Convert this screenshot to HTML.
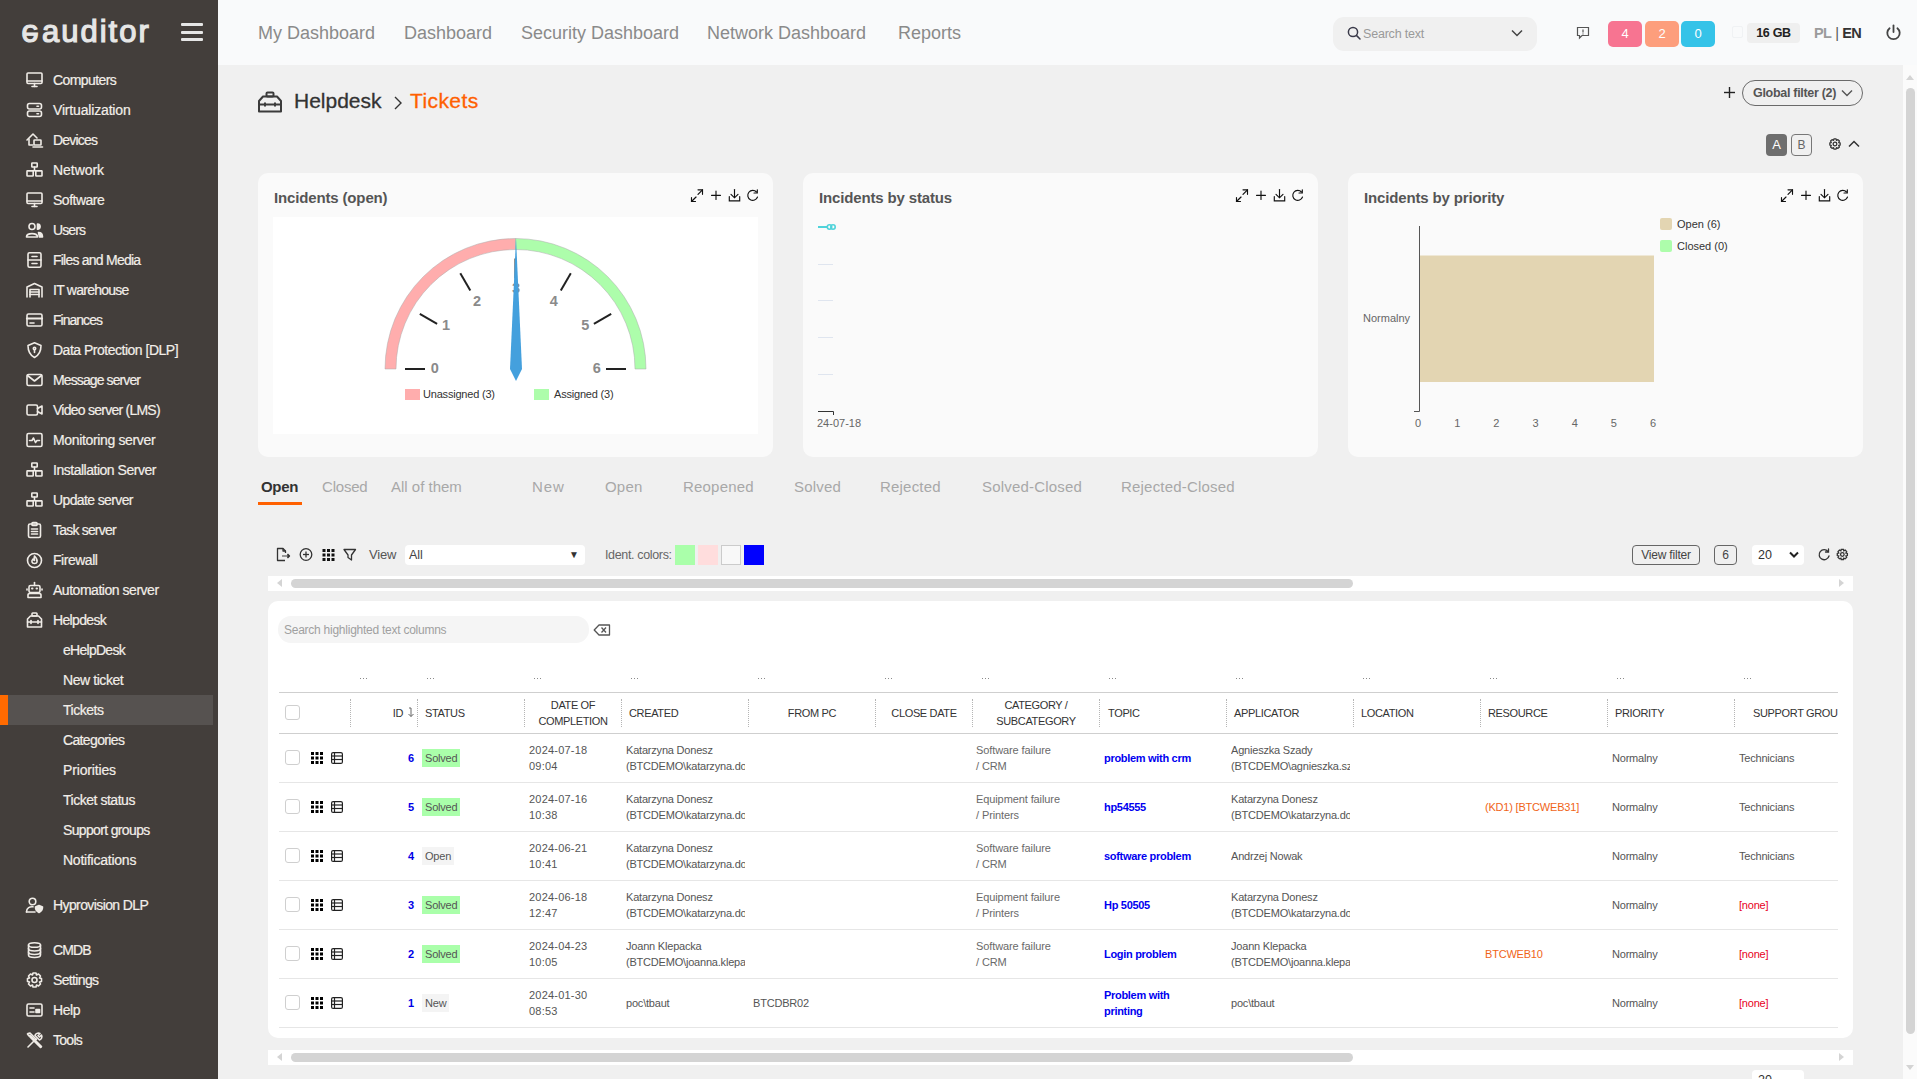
<!DOCTYPE html>
<html><head><meta charset="utf-8">
<style>
*{box-sizing:border-box;margin:0;padding:0}
html,body{width:1917px;height:1079px;overflow:hidden}
body{position:relative;background:#f0f0f0;font-family:"Liberation Sans",sans-serif;color:#555}
.abs{position:absolute}
#sb{position:absolute;left:0;top:0;width:218px;height:1079px;background:#433e3b}
.si{position:absolute;left:0;height:30px;line-height:30px;font-size:14px;letter-spacing:-0.45px;color:#f2eee9;white-space:nowrap;-webkit-text-stroke:0.2px #f2eee9}
.si span{position:absolute;left:53px;top:0}
.si.sub span{left:63px}
.si svg{position:absolute;left:25px;top:6px;width:19px;height:18px;fill:none;stroke:#efebe6;stroke-width:1.6;stroke-linecap:round;stroke-linejoin:round}
.act{background:#565250;width:213px}
.act:before{content:"";position:absolute;left:0;top:0;width:8px;height:30px;background:#ff6a00}
#top{position:absolute;left:218px;top:0;width:1699px;height:65px;background:#f9fafb}
.badge{top:21px;width:34px;height:26px;border-radius:5px;color:#fff;font-size:13px;line-height:26px;text-align:center}
.card{width:515px;height:284px;background:#fafafa;border-radius:10px}
.ctitle{font-size:15px;font-weight:bold;color:#555;line-height:20px;white-space:nowrap;letter-spacing:-0.15px}
.tab{top:477px;font-size:15px;line-height:20px;color:#a8a8a8;white-space:nowrap}
.dots{width:7px;height:1px;background:repeating-linear-gradient(90deg,#8a8a8a 0 1px,transparent 1px 3px)}
.cb{width:15px;height:15px;border:1px solid #cfcfcf;border-radius:3px;background:#fff}
.th{font-size:11px;line-height:16px;color:#333;letter-spacing:-0.35px;white-space:nowrap}
.td{font-size:11px;line-height:16px;color:#555;letter-spacing:-0.2px;white-space:nowrap}
.tid{width:100px;text-align:right;font-size:11px;font-weight:bold;line-height:16px;color:#0000e6}
.badge2{height:18px;padding:0 3px;font-size:11px;line-height:18px;color:#555;letter-spacing:-0.2px}
.ttopic{font-size:11px;font-weight:bold;line-height:16px;color:#0000f0;letter-spacing:-0.3px;white-space:nowrap}
.tres{font-size:11px;line-height:16px;color:#f06418;letter-spacing:-0.2px;white-space:nowrap}
.tnone{font-size:11px;line-height:16px;color:#e8001c;letter-spacing:-0.2px;white-space:nowrap}
.tdate{font-size:11px;line-height:16px;color:#555;letter-spacing:0.2px;white-space:nowrap}
.tcat{font-size:11px;line-height:16px;color:#6a6a6a;letter-spacing:-0.1px;white-space:nowrap}
.nav{position:absolute;top:19px;font-size:18px;color:#8a8a8a;white-space:nowrap;line-height:28px}
</style></head><body>
<div id="sb">
  <svg class="abs" style="left:0;top:0" width="170" height="60" viewBox="0 0 170 60"><text x="42" y="42" font-family="Liberation Sans" font-size="31" fill="#e6e6e6" stroke="#e6e6e6" stroke-width="1.2" letter-spacing="2"><tspan>auditor</tspan></text><text transform="translate(21.5,25) scale(1,-1)" x="0" y="0" font-family="Liberation Sans" font-size="31" fill="#e6e6e6" stroke="#e6e6e6" stroke-width="1.2">e</text></svg>
  <div class="abs" style="left:181px;top:23px;width:22px;height:3px;background:#e6e6e6;border-radius:1px"></div>
  <div class="abs" style="left:181px;top:31px;width:22px;height:3px;background:#e6e6e6;border-radius:1px"></div>
  <div class="abs" style="left:181px;top:38px;width:22px;height:3px;background:#e6e6e6;border-radius:1px"></div>
  <div class="si" style="top:65px;width:218px"><svg viewBox="0 0 19 18"><rect x="2" y="2" width="15" height="10.5" rx="1"/><line x1="2" y1="10" x2="17" y2="10"/><line x1="7" y1="15.5" x2="12" y2="15.5"/><line x1="9.5" y1="12.5" x2="9.5" y2="15.5"/></svg><span style="letter-spacing:-0.58px">Computers</span></div>
<div class="si" style="top:95px;width:218px"><svg viewBox="0 0 19 18"><rect x="2.5" y="2.5" width="14" height="5.5" rx="2"/><rect x="2.5" y="10" width="14" height="5.5" rx="2"/><line x1="12" y1="5.2" x2="13.5" y2="5.2"/><line x1="12" y1="12.8" x2="13.5" y2="12.8"/></svg><span style="letter-spacing:-0.17px">Virtualization</span></div>
<div class="si" style="top:125px;width:218px"><svg viewBox="0 0 19 18"><path d="M2 9 L8 3 L12 7"/><path d="M4 8 V14 H8"/><rect x="9" y="9" width="7" height="5" rx="0.5"/><line x1="8" y1="16" x2="17.5" y2="16"/></svg><span style="letter-spacing:-0.81px">Devices</span></div>
<div class="si" style="top:155px;width:218px"><svg viewBox="0 0 19 18"><rect x="6.8" y="2" width="5.4" height="4" rx="0.5"/><rect x="2" y="9.8" width="6.2" height="5.2" rx="0.5"/><rect x="10.8" y="9.8" width="6.2" height="5.2" rx="0.5"/><path d="M9.5 6 V9.8 M3 9.8 H16"/></svg><span style="letter-spacing:-0.05px">Network</span></div>
<div class="si" style="top:185px;width:218px"><svg viewBox="0 0 19 18"><rect x="2" y="2" width="15" height="10.5" rx="1"/><line x1="2" y1="10" x2="17" y2="10"/><line x1="7" y1="15.5" x2="12" y2="15.5"/><line x1="9.5" y1="12.5" x2="9.5" y2="15.5"/></svg><span style="letter-spacing:-0.49px">Software</span></div>
<div class="si" style="top:215px;width:218px"><svg viewBox="0 0 19 18"><circle cx="7" cy="5.5" r="3"/><path d="M1.5 16 C1.5 11.5 12.5 11.5 12.5 16 Z"/><path d="M12.5 3 A2.6 2.6 0 0 1 12.5 8.2 Z" fill="#efebe6"/><path d="M13.5 11.5 C16 11.5 17.5 13 17.5 16 H14.5 Z" fill="#efebe6"/></svg><span style="letter-spacing:-0.91px">Users</span></div>
<div class="si" style="top:245px;width:218px"><svg viewBox="0 0 19 18"><rect x="3" y="1.8" width="13" height="14.5" rx="1.5"/><line x1="3" y1="9" x2="16" y2="9"/><line x1="7" y1="5.5" x2="12" y2="5.5"/><line x1="7" y1="12.5" x2="12" y2="12.5"/></svg><span style="letter-spacing:-0.77px">Files and Media</span></div>
<div class="si" style="top:275px;width:218px"><svg viewBox="0 0 19 18"><path d="M2 16 V6 L9.5 2.5 L17 6 V16"/><path d="M5 16 V8.5 H14 V16"/><line x1="5" y1="11" x2="14" y2="11"/><line x1="5" y1="13.5" x2="14" y2="13.5"/></svg><span style="letter-spacing:-0.75px">IT warehouse</span></div>
<div class="si" style="top:305px;width:218px"><svg viewBox="0 0 19 18"><rect x="2" y="3" width="15" height="12" rx="1.5"/><line x1="2" y1="7.5" x2="17" y2="7.5" stroke-width="2.2"/><line x1="5" y1="12" x2="9" y2="12"/></svg><span style="letter-spacing:-0.98px">Finances</span></div>
<div class="si" style="top:335px;width:218px"><svg viewBox="0 0 19 18"><path d="M9.5 1.8 L16 4.5 C16 10.5 13.5 14.5 9.5 16.5 C5.5 14.5 3 10.5 3 4.5 Z"/><circle cx="9.5" cy="7.5" r="1.2"/><line x1="9.5" y1="8.5" x2="9.5" y2="11.5"/></svg><span style="letter-spacing:-0.49px">Data Protection [DLP]</span></div>
<div class="si" style="top:365px;width:218px"><svg viewBox="0 0 19 18"><rect x="2" y="3.5" width="15" height="11" rx="1.5"/><path d="M2.5 4.5 L9.5 10 L16.5 4.5"/></svg><span style="letter-spacing:-0.89px">Message server</span></div>
<div class="si" style="top:395px;width:218px"><svg viewBox="0 0 19 18"><rect x="2" y="4" width="10.5" height="10" rx="1.5"/><path d="M12.5 7.5 L17 5 V13 L12.5 10.5"/></svg><span style="letter-spacing:-0.75px">Video server (LMS)</span></div>
<div class="si" style="top:425px;width:218px"><svg viewBox="0 0 19 18"><rect x="2" y="2.5" width="15" height="13" rx="1.5"/><path d="M4.5 9.5 H7 L8.5 7 L10.5 11.5 L12 9.5 H14.5"/></svg><span style="letter-spacing:-0.35px">Monitoring server</span></div>
<div class="si" style="top:455px;width:218px"><svg viewBox="0 0 19 18"><rect x="6.8" y="2" width="5.4" height="4" rx="0.5"/><rect x="2" y="9.8" width="6.2" height="5.2" rx="0.5"/><rect x="10.8" y="9.8" width="6.2" height="5.2" rx="0.5"/><path d="M9.5 6 V9.8 M3 9.8 H16"/></svg><span style="letter-spacing:-0.48px">Installation Server</span></div>
<div class="si" style="top:485px;width:218px"><svg viewBox="0 0 19 18"><rect x="6.8" y="2" width="5.4" height="4" rx="0.5"/><rect x="2" y="9.8" width="6.2" height="5.2" rx="0.5"/><rect x="10.8" y="9.8" width="6.2" height="5.2" rx="0.5"/><path d="M9.5 6 V9.8 M3 9.8 H16"/></svg><span style="letter-spacing:-0.62px">Update server</span></div>
<div class="si" style="top:515px;width:218px"><svg viewBox="0 0 19 18"><rect x="3.5" y="3" width="12" height="13.5" rx="1.5"/><rect x="7" y="1.5" width="5" height="3" rx="0.8"/><line x1="6.5" y1="8" x2="12.5" y2="8"/><line x1="6.5" y1="10.5" x2="12.5" y2="10.5"/><line x1="6.5" y1="13" x2="12.5" y2="13"/></svg><span style="letter-spacing:-0.8px">Task server</span></div>
<div class="si" style="top:545px;width:218px"><svg viewBox="0 0 19 18"><circle cx="9.5" cy="9.5" r="7"/><path d="M9.5 5 C12 7.5 12.5 9 12 11 C11.5 13 7.5 13 7 11 C6.5 9.5 7.5 8.5 8 8 C8.5 9 9 9.5 9.5 9.5 C9 8 9 6.5 9.5 5 Z"/></svg><span style="letter-spacing:-0.47px">Firewall</span></div>
<div class="si" style="top:575px;width:218px"><svg viewBox="0 0 19 18"><rect x="4" y="4.5" width="11" height="7" rx="1.5"/><line x1="9.5" y1="1.5" x2="9.5" y2="4.5"/><line x1="7" y1="7.5" x2="7.5" y2="7.5" stroke-width="2"/><line x1="11.5" y1="7.5" x2="12" y2="7.5" stroke-width="2"/><path d="M3 16.5 V14 C3 13 4 12.5 5 12.5 H14 C15 12.5 16 13 16 14 V16.5 Z"/><line x1="2" y1="8" x2="2" y2="9"/><line x1="17" y1="8" x2="17" y2="9"/></svg><span style="letter-spacing:-0.47px">Automation server</span></div>
<div class="si" style="top:605px;width:218px"><svg viewBox="0 0 19 18"><rect x="7" y="2" width="5" height="3" rx="0.8"/><path d="M2.5 16 V8 L5.5 5 H13.5 L16.5 8 V16 Z"/><line x1="2.5" y1="11" x2="16.5" y2="11"/><line x1="6" y1="9.5" x2="6" y2="12.5"/><line x1="13" y1="9.5" x2="13" y2="12.5"/></svg><span style="letter-spacing:-0.65px">Helpdesk</span></div>
<div class="si sub" style="top:635px;width:218px"><span style="letter-spacing:-0.72px">eHelpDesk</span></div>
<div class="si sub" style="top:665px;width:218px"><span style="letter-spacing:-0.43px">New ticket</span></div>
<div class="si sub act" style="top:695px;width:213px"><span style="letter-spacing:-0.47px">Tickets</span></div>
<div class="si sub" style="top:725px;width:218px"><span style="letter-spacing:-0.64px">Categories</span></div>
<div class="si sub" style="top:755px;width:218px"><span style="letter-spacing:-0.16px">Priorities</span></div>
<div class="si sub" style="top:785px;width:218px"><span style="letter-spacing:-0.47px">Ticket status</span></div>
<div class="si sub" style="top:815px;width:218px"><span style="letter-spacing:-0.65px">Support groups</span></div>
<div class="si sub" style="top:845px;width:218px"><span style="letter-spacing:-0.24px">Notifications</span></div>
<div class="si" style="top:890px;width:218px"><svg viewBox="0 0 19 18"><circle cx="7.5" cy="5.5" r="3.3"/><path d="M1.5 16 C1.5 11.5 5 10.5 8 10.8"/><line x1="1.5" y1="16" x2="10" y2="16"/><path d="M14 9.5 L17.5 11 C17.5 14 16 15.5 14 16.5 C12 15.5 10.5 14 10.5 11 Z" fill="#efebe6"/></svg><span style="letter-spacing:-0.6px">Hyprovision DLP</span></div>
<div class="si" style="top:935px;width:218px"><svg viewBox="0 0 19 18"><ellipse cx="9.5" cy="4" rx="6" ry="2.3"/><path d="M3.5 4 V14 C3.5 15.5 6 16.5 9.5 16.5 C13 16.5 15.5 15.5 15.5 14 V4"/><path d="M3.5 7.5 C3.5 9 6 10 9.5 10 C13 10 15.5 9 15.5 7.5"/><path d="M3.5 11 C3.5 12.5 6 13.5 9.5 13.5 C13 13.5 15.5 12.5 15.5 11"/></svg><span style="letter-spacing:-0.84px">CMDB</span></div>
<div class="si" style="top:965px;width:218px"><svg viewBox="0 0 19 18"><circle cx="9.5" cy="9" r="2.5"/><path d="M8 2 H11 L11.5 4 L13.5 3 L15.5 5 L14.5 7 L16.5 7.5 V10.5 L14.5 11 L15.5 13 L13.5 15 L11.5 14 L11 16 H8 L7.5 14 L5.5 15 L3.5 13 L4.5 11 L2.5 10.5 V7.5 L4.5 7 L3.5 5 L5.5 3 L7.5 4 Z"/></svg><span style="letter-spacing:-0.65px">Settings</span></div>
<div class="si" style="top:995px;width:218px"><svg viewBox="0 0 19 18"><rect x="2" y="3" width="15" height="12" rx="1.5"/><line x1="5" y1="7" x2="9" y2="7"/><line x1="5" y1="11" x2="9" y2="11"/><rect x="11" y="8.5" width="3.5" height="3" fill="#efebe6"/></svg><span style="letter-spacing:-0.46px">Help</span></div>
<div class="si" style="top:1025px;width:218px"><svg viewBox="0 0 19 18"><path d="M3 16 L11 8"/><path d="M10 4.5 C10.5 2.5 13 1.5 15 2.5 L13 4.5 L14.5 6 L16.5 4 C17.5 6 16.5 8.5 14.5 9 Z"/><path d="M3 2.5 L5 2 L11.5 8.5 M16 16 L11.5 11.5"/><path d="M2.5 3 L4 5 L6 5 L16.5 15.5 L15.5 16.5 L5 6 L5 4"/></svg><span style="letter-spacing:-0.72px">Tools</span></div>

</div>
<div id="top">
  <div class="nav" style="left:40px">My Dashboard</div>
  <div class="nav" style="left:186px">Dashboard</div>
  <div class="nav" style="left:303px">Security Dashboard</div>
  <div class="nav" style="left:489px">Network Dashboard</div>
  <div class="nav" style="left:680px">Reports</div>
    <div class="abs" style="left:1115px;top:17px;width:204px;height:34px;background:#f0f0f0;border-radius:11px"></div>
  <svg class="abs" style="left:1129px;top:26px" width="15" height="15" viewBox="0 0 15 15" fill="none" stroke="#3a3a4a" stroke-width="1.5"><circle cx="6" cy="6" r="4.6"/><line x1="9.4" y1="9.4" x2="13" y2="13" stroke-linecap="round"/></svg>
  <div class="abs" style="left:1145px;top:26px;font-size:12.5px;line-height:16px;color:#9a9a9a;letter-spacing:-0.2px">Search text</div>
  <svg class="abs" style="left:1293px;top:29px" width="12" height="8" viewBox="0 0 12 8" fill="none" stroke="#444" stroke-width="1.5"><path d="M1 1.5 L6 6.5 L11 1.5"/></svg>
  <svg class="abs" style="left:1358px;top:26px" width="14" height="14" viewBox="0 0 14 14" fill="none" stroke="#555" stroke-width="1.2"><path d="M1.5 1.5 H12.5 V9.5 H6 L3.5 12 V9.5 H1.5 Z"/><line x1="7" y1="3.5" x2="7" y2="6.5"/><line x1="7" y1="7.6" x2="7" y2="8.4"/></svg>
  <div class="abs badge" style="left:1390px;background:#f77491">4</div>
  <div class="abs badge" style="left:1427px;background:#fd9e7c">2</div>
  <div class="abs badge" style="left:1463px;background:#35c3e8">0</div>
  <div class="abs" style="left:1514px;top:26px;width:11px;height:12px;border:1px solid #f0f2f4;border-radius:2px"></div>
  <div class="abs" style="left:1529px;top:23px;width:53px;height:20px;background:#efefef;border-radius:4px;font-size:12.5px;font-weight:bold;color:#222;line-height:20px;text-align:center;letter-spacing:-0.3px">16 GB</div>
  <div class="abs" style="left:1596px;top:23px;font-size:14.5px;font-weight:bold;line-height:20px;letter-spacing:-0.7px;white-space:nowrap"><span style="color:#9b9b9b">PL</span><span style="color:#555;font-weight:normal;margin-left:4px">|</span><span style="color:#333;margin-left:4px">EN</span></div>
  <svg class="abs" style="left:1667px;top:24px" width="17" height="17" viewBox="0 0 17 17" fill="none" stroke="#444" stroke-width="1.8" stroke-linecap="round"><path d="M4.6 4.2 A6.2 6.2 0 1 0 12.4 4.2"/><line x1="8.5" y1="1.5" x2="8.5" y2="8"/></svg>

</div>
<!-- breadcrumb -->
<svg class="abs" style="left:257px;top:90px" width="26" height="24" viewBox="0 0 26 24" fill="none" stroke="#3b3b3b" stroke-width="2" stroke-linejoin="round"><rect x="9.5" y="2.5" width="7" height="4" rx="1"/><path d="M2 21.5 V11 L6 6.5 H20 L24 11 V21.5 Z"/><line x1="2" y1="14.5" x2="24" y2="14.5"/><line x1="8" y1="12.5" x2="8" y2="16.5"/><line x1="18" y1="12.5" x2="18" y2="16.5"/></svg>
<div class="abs" style="left:294px;top:88px;font-size:21px;line-height:26px;color:#333;white-space:nowrap;-webkit-text-stroke:0.3px #333">Helpdesk</div>
<svg class="abs" style="left:392px;top:95px" width="12" height="16" viewBox="0 0 12 16" fill="none" stroke="#333" stroke-width="1.4"><path d="M3 2 L9 8 L3 14"/></svg>
<div class="abs" style="left:410px;top:88px;font-size:21px;line-height:26px;color:#ff6000;white-space:nowrap;-webkit-text-stroke:0.3px #ff6000;letter-spacing:0.4px">Tickets</div>
<!-- global filter -->
<svg class="abs" style="left:1723px;top:86px" width="13" height="13" viewBox="0 0 13 13" stroke="#222" stroke-width="1.4"><line x1="6.5" y1="1" x2="6.5" y2="12"/><line x1="1" y1="6.5" x2="12" y2="6.5"/></svg>
<div class="abs" style="left:1742px;top:80px;width:121px;height:26px;border:1px solid #6a6a6a;border-radius:13px"></div>
<div class="abs" style="left:1753px;top:85px;font-size:12.5px;font-weight:bold;line-height:16px;color:#555;letter-spacing:-0.3px;white-space:nowrap">Global filter (2)</div>
<svg class="abs" style="left:1841px;top:89px" width="12" height="8" viewBox="0 0 12 8" fill="none" stroke="#555" stroke-width="1.4"><path d="M1 1.5 L6 6.5 L11 1.5"/></svg>
<div class="abs" style="left:1766px;top:134px;width:21px;height:22px;background:#6e6e6e;border-radius:4px;color:#fff;font-size:13px;line-height:22px;text-align:center">A</div>
<div class="abs" style="left:1791px;top:134px;width:21px;height:22px;border:1px solid #777;border-radius:4px;color:#666;font-size:12px;line-height:20px;text-align:center">B</div>
<svg class="abs" style="left:1828px;top:137px" width="14" height="14" viewBox="0 0 19 18" fill="none" stroke="#333" stroke-width="1.7" stroke-linejoin="round"><circle cx="9.5" cy="9" r="2.5"/><path d="M8 2 H11 L11.5 4 L13.5 3 L15.5 5 L14.5 7 L16.5 7.5 V10.5 L14.5 11 L15.5 13 L13.5 15 L11.5 14 L11 16 H8 L7.5 14 L5.5 15 L3.5 13 L4.5 11 L2.5 10.5 V7.5 L4.5 7 L3.5 5 L5.5 3 L7.5 4 Z"/></svg>
<svg class="abs" style="left:1848px;top:139px" width="12" height="9" viewBox="0 0 12 9" fill="none" stroke="#333" stroke-width="1.5"><path d="M1 7.5 L6 2.5 L11 7.5"/></svg>
<!-- right scrollbar -->
<div class="abs" style="left:1903px;top:65px;width:14px;height:1014px;background:#fbfbfb"></div>
<div class="abs" style="left:1906px;top:88px;width:9px;height:946px;background:#d4d4d4;border-radius:5px"></div>
<div class="abs" style="left:1906px;top:75px;width:0;height:0;border-left:4.5px solid transparent;border-right:4.5px solid transparent;border-bottom:5px solid #d4d4d4"></div>
<div class="abs" style="left:1906px;top:1065px;width:0;height:0;border-left:4.5px solid transparent;border-right:4.5px solid transparent;border-top:5px solid #d4d4d4"></div>
<div class="abs card" style="left:258px;top:173px"></div>
<div class="abs ctitle" style="left:274px;top:188px">Incidents (open)</div>
<svg class="abs" style="left:690px;top:188px" width="72" height="15" viewBox="0 0 72 15" fill="none" stroke="#111" stroke-width="1.15" stroke-linecap="round">
<path d="M1.5 13.5 L6 9"/><path d="M1.5 9.5 V13.5 H5.5"/><path d="M8 1.8 H12.5 V6.3" /><path d="M12.5 1.8 L8 6.3"/>
<line x1="26" y1="3" x2="26" y2="11.5"/><line x1="21.5" y1="7.3" x2="30.5" y2="7.3"/>
<line x1="44.5" y1="1.5" x2="44.5" y2="9.5"/><path d="M41 6.3 L44.5 9.8 L48 6.3"/><path d="M39.3 8.5 V12.8 H49.7 V8.5"/>
<path d="M66.5 4 A5 5 0 1 0 67.5 9"/><path d="M67.3 1.8 V5 H64"/>
</svg>
<div class="abs card" style="left:803px;top:173px"></div>
<div class="abs ctitle" style="left:819px;top:188px">Incidents by status</div>
<svg class="abs" style="left:1235px;top:188px" width="72" height="15" viewBox="0 0 72 15" fill="none" stroke="#111" stroke-width="1.15" stroke-linecap="round">
<path d="M1.5 13.5 L6 9"/><path d="M1.5 9.5 V13.5 H5.5"/><path d="M8 1.8 H12.5 V6.3" /><path d="M12.5 1.8 L8 6.3"/>
<line x1="26" y1="3" x2="26" y2="11.5"/><line x1="21.5" y1="7.3" x2="30.5" y2="7.3"/>
<line x1="44.5" y1="1.5" x2="44.5" y2="9.5"/><path d="M41 6.3 L44.5 9.8 L48 6.3"/><path d="M39.3 8.5 V12.8 H49.7 V8.5"/>
<path d="M66.5 4 A5 5 0 1 0 67.5 9"/><path d="M67.3 1.8 V5 H64"/>
</svg>
<div class="abs card" style="left:1348px;top:173px"></div>
<div class="abs ctitle" style="left:1364px;top:188px">Incidents by priority</div>
<svg class="abs" style="left:1780px;top:188px" width="72" height="15" viewBox="0 0 72 15" fill="none" stroke="#111" stroke-width="1.15" stroke-linecap="round">
<path d="M1.5 13.5 L6 9"/><path d="M1.5 9.5 V13.5 H5.5"/><path d="M8 1.8 H12.5 V6.3" /><path d="M12.5 1.8 L8 6.3"/>
<line x1="26" y1="3" x2="26" y2="11.5"/><line x1="21.5" y1="7.3" x2="30.5" y2="7.3"/>
<line x1="44.5" y1="1.5" x2="44.5" y2="9.5"/><path d="M41 6.3 L44.5 9.8 L48 6.3"/><path d="M39.3 8.5 V12.8 H49.7 V8.5"/>
<path d="M66.5 4 A5 5 0 1 0 67.5 9"/><path d="M67.3 1.8 V5 H64"/>
</svg>
<div class="abs" style="left:273px;top:217px;width:485px;height:217px;background:#fff"></div>
<svg class="abs" style="left:273px;top:217px" width="485" height="217" viewBox="0 0 485 217"><path d="M112 152 A130.5 130.5 0 0 1 242.5 21.5 L242.5 32.5 A119.5 119.5 0 0 0 123 152 Z" fill="#ffadad" stroke="#aaa" stroke-width="0.5"/><path d="M242.5 21.5 A130.5 130.5 0 0 1 373 152 L362 152 A119.5 119.5 0 0 0 242.5 32.5 Z" fill="#adfdab" stroke="#aaa" stroke-width="0.5"/><line x1="152.0" y1="152.0" x2="132.0" y2="152.0" stroke="#222" stroke-width="2"/><text x="161.8" y="155.7" text-anchor="middle" font-family="Liberation Sans" font-weight="bold" font-size="14.5" fill="#8a8a8a">0</text><line x1="164.1" y1="106.8" x2="146.8" y2="96.8" stroke="#222" stroke-width="2"/><text x="173.0" y="112.6" text-anchor="middle" font-family="Liberation Sans" font-weight="bold" font-size="14.5" fill="#8a8a8a">1</text><line x1="197.3" y1="73.6" x2="187.3" y2="56.3" stroke="#222" stroke-width="2"/><text x="204.0" y="89.0" text-anchor="middle" font-family="Liberation Sans" font-weight="bold" font-size="14.5" fill="#8a8a8a">2</text><line x1="242.5" y1="61.5" x2="242.5" y2="41.5" stroke="#222" stroke-width="2"/><text x="243.0" y="76.2" text-anchor="middle" font-family="Liberation Sans" font-weight="bold" font-size="14.5" fill="#8a8a8a">3</text><line x1="287.8" y1="73.6" x2="297.8" y2="56.3" stroke="#222" stroke-width="2"/><text x="280.7" y="89.0" text-anchor="middle" font-family="Liberation Sans" font-weight="bold" font-size="14.5" fill="#8a8a8a">4</text><line x1="320.9" y1="106.8" x2="338.2" y2="96.8" stroke="#222" stroke-width="2"/><text x="312.3" y="112.6" text-anchor="middle" font-family="Liberation Sans" font-weight="bold" font-size="14.5" fill="#8a8a8a">5</text><line x1="333.0" y1="152.0" x2="353.0" y2="152.0" stroke="#222" stroke-width="2"/><text x="323.8" y="155.7" text-anchor="middle" font-family="Liberation Sans" font-weight="bold" font-size="14.5" fill="#8a8a8a">6</text><path d="M243 21 L249 152 L243 164 L237 152 Z" fill="#44a0dd"/><rect x="132" y="172" width="15" height="11" fill="#ffadad"/><text x="150" y="181" font-family="Liberation Sans" font-size="11" fill="#333" letter-spacing="-0.2">Unassigned (3)</text><rect x="261" y="172" width="15" height="11" fill="#adfdab"/><text x="281" y="181" font-family="Liberation Sans" font-size="11" fill="#333" letter-spacing="-0.2">Assigned (3)</text></svg>
<svg class="abs" style="left:803px;top:173px" width="515" height="284" viewBox="0 0 515 284">
<line x1="15" y1="54" x2="25" y2="54" stroke="#4fd3da" stroke-width="2"/><circle cx="26.5" cy="54" r="2.2" fill="none" stroke="#4fd3da" stroke-width="1.6"/><circle cx="30" cy="54" r="2.2" fill="none" stroke="#4fd3da" stroke-width="1.6"/>
<g stroke="#dfe5ef" stroke-width="1"><line x1="15" y1="91.5" x2="30" y2="91.5"/><line x1="15" y1="127.5" x2="30" y2="127.5"/><line x1="15" y1="164.5" x2="30" y2="164.5"/><line x1="15" y1="201.5" x2="30" y2="201.5"/></g>
<path d="M15 238.5 H30.5 V242" fill="none" stroke="#333" stroke-width="1"/>
<text x="14" y="254" font-family="Liberation Sans" font-size="11" fill="#666">24-07-18</text>
</svg>
<svg class="abs" style="left:1348px;top:173px" width="515" height="284" viewBox="0 0 515 284">
<rect x="71" y="82.5" width="235" height="126.5" fill="#e3d5b2"/>
<path d="M71.5 53 V238.5 H66" fill="none" stroke="#555" stroke-width="1"/>
<text x="15" y="149" font-family="Liberation Sans" font-size="11" fill="#666">Normalny</text>
<text x="70.0" y="254" text-anchor="middle" font-family="Liberation Sans" font-size="11" fill="#666">0</text><text x="109.2" y="254" text-anchor="middle" font-family="Liberation Sans" font-size="11" fill="#666">1</text><text x="148.3" y="254" text-anchor="middle" font-family="Liberation Sans" font-size="11" fill="#666">2</text><text x="187.5" y="254" text-anchor="middle" font-family="Liberation Sans" font-size="11" fill="#666">3</text><text x="226.7" y="254" text-anchor="middle" font-family="Liberation Sans" font-size="11" fill="#666">4</text><text x="265.9" y="254" text-anchor="middle" font-family="Liberation Sans" font-size="11" fill="#666">5</text><text x="305.0" y="254" text-anchor="middle" font-family="Liberation Sans" font-size="11" fill="#666">6</text>
<rect x="312" y="45" width="12" height="12" rx="2" fill="#e3d5b2"/><text x="329" y="55" font-family="Liberation Sans" font-size="11" fill="#333">Open (6)</text>
<rect x="312" y="67" width="12" height="12" rx="2" fill="#adfdab"/><text x="329" y="77" font-family="Liberation Sans" font-size="11" fill="#333">Closed (0)</text>
</svg>

<!-- tabs -->
<div class="abs tab" style="left:261px;font-weight:bold;color:#333;letter-spacing:-0.3px">Open</div>
<div class="abs" style="left:258px;top:502px;width:44px;height:3px;background:#ff6000"></div>
<div class="abs tab" style="left:322px;letter-spacing:-0.2px">Closed</div>
<div class="abs tab" style="left:391px">All of them</div>
<div class="abs tab" style="left:532px;letter-spacing:0.9px">New</div>
<div class="abs tab" style="left:605px;letter-spacing:0.2px">Open</div>
<div class="abs tab" style="left:683px;letter-spacing:0.2px">Reopened</div>
<div class="abs tab" style="left:794px;letter-spacing:0.2px">Solved</div>
<div class="abs tab" style="left:880px;letter-spacing:0.2px">Rejected</div>
<div class="abs tab" style="left:982px;letter-spacing:0.2px">Solved-Closed</div>
<div class="abs tab" style="left:1121px;letter-spacing:0.2px">Rejected-Closed</div>
<!-- toolbar -->
<svg class="abs" style="left:276px;top:547px" width="82" height="15" viewBox="0 0 82 15" fill="none" stroke="#333" stroke-width="1.3" stroke-linejoin="round">
<path d="M9 13.5 H1.5 V1.5 H7 L9.5 4 V6"/><path d="M7 1.5 V4 H9.5" /><line x1="6" y1="9" x2="13" y2="9" stroke="#666"/><path d="M11.5 7 L13.5 9 L11.5 11" fill="#333"/>
<circle cx="30" cy="7.5" r="5.8"/><line x1="30" y1="4.5" x2="30" y2="10.5"/><line x1="27" y1="7.5" x2="33" y2="7.5"/>
<g fill="#111" stroke="none"><rect x="46.5" y="2" width="3" height="3"/><rect x="51" y="2" width="3" height="3"/><rect x="55.5" y="2" width="3" height="3"/><rect x="46.5" y="6.5" width="3" height="3"/><rect x="51" y="6.5" width="3" height="3"/><rect x="55.5" y="6.5" width="3" height="3"/><rect x="46.5" y="11" width="3" height="3"/><rect x="51" y="11" width="3" height="3"/><rect x="55.5" y="11" width="3" height="3"/></g>
<path d="M68 2.5 H79.5 L75.5 8 V13 L72 10.5 V8 Z"/>
</svg>
<div class="abs" style="left:369px;top:547px;font-size:13px;line-height:16px;color:#555;letter-spacing:-0.2px">View</div>
<div class="abs" style="left:405px;top:545px;width:180px;height:20px;background:#fff;border-radius:4px"></div>
<div class="abs" style="left:409px;top:547px;font-size:12.5px;line-height:16px;color:#444">All</div>
<div class="abs" style="left:569px;top:549px;font-size:10px;line-height:12px;color:#333">&#9660;</div>
<div class="abs" style="left:605px;top:547px;font-size:12.5px;line-height:16px;color:#666;letter-spacing:-0.35px">Ident. colors:</div>
<div class="abs" style="left:675px;top:545px;width:20px;height:20px;background:#aaffaa"></div>
<div class="abs" style="left:698px;top:545px;width:20px;height:20px;background:#ffdddd"></div>
<div class="abs" style="left:721px;top:545px;width:20px;height:20px;background:#f8f8f8;border:1px solid #cbcbcb"></div>
<div class="abs" style="left:744px;top:545px;width:20px;height:20px;background:#0000ff"></div>
<div class="abs" style="left:1632px;top:545px;width:68px;height:20px;border:1px solid #666;border-radius:4px;font-size:12px;line-height:18px;text-align:center;color:#444;letter-spacing:-0.2px">View filter</div>
<div class="abs" style="left:1714px;top:545px;width:23px;height:20px;border:1px solid #666;border-radius:4px;font-size:12px;line-height:18px;text-align:center;color:#444">6</div>
<div class="abs" style="left:1752px;top:545px;width:52px;height:20px;background:#fff;border-radius:4px;font-size:12.5px;line-height:20px;color:#333;padding-left:6px">20</div>
<svg class="abs" style="left:1789px;top:551px" width="10" height="8" viewBox="0 0 10 8" fill="none" stroke="#222" stroke-width="2"><path d="M1 1.5 L5 5.5 L9 1.5"/></svg>
<svg class="abs" style="left:1818px;top:548px" width="32" height="13" viewBox="0 0 32 13" fill="none" stroke="#333" stroke-width="1.3" stroke-linecap="round">
<path d="M10 3.5 A5 5 0 1 0 11 8"/><path d="M10.5 1 V4 H7.5"/>
<g transform="translate(17.5,0) scale(0.72)" stroke-width="1.8"><circle cx="9.5" cy="9" r="2.5"/><path d="M8 2 H11 L11.5 4 L13.5 3 L15.5 5 L14.5 7 L16.5 7.5 V10.5 L14.5 11 L15.5 13 L13.5 15 L11.5 14 L11 16 H8 L7.5 14 L5.5 15 L3.5 13 L4.5 11 L2.5 10.5 V7.5 L4.5 7 L3.5 5 L5.5 3 L7.5 4 Z"/></g>
</svg>
<!-- top h scrollbar -->
<div class="abs" style="left:268px;top:576px;width:1585px;height:15px;background:#fff"></div>
<div class="abs" style="left:291px;top:579px;width:1062px;height:9px;background:#d4d4d4;border-radius:5px"></div>
<div class="abs" style="left:277px;top:579px;width:0;height:0;border-top:4.5px solid transparent;border-bottom:4.5px solid transparent;border-right:5px solid #d4d4d4"></div>
<div class="abs" style="left:1839px;top:579px;width:0;height:0;border-top:4.5px solid transparent;border-bottom:4.5px solid transparent;border-left:5px solid #d4d4d4"></div>
<!-- bottom h scrollbar -->
<div class="abs" style="left:268px;top:1050px;width:1585px;height:15px;background:#fff"></div>
<div class="abs" style="left:291px;top:1053px;width:1062px;height:9px;background:#d4d4d4;border-radius:5px"></div>
<div class="abs" style="left:277px;top:1053px;width:0;height:0;border-top:4.5px solid transparent;border-bottom:4.5px solid transparent;border-right:5px solid #d4d4d4"></div>
<div class="abs" style="left:1839px;top:1053px;width:0;height:0;border-top:4.5px solid transparent;border-bottom:4.5px solid transparent;border-left:5px solid #d4d4d4"></div>
<div class="abs" style="left:1752px;top:1070px;width:52px;height:20px;background:#fff;border-radius:4px;font-size:12.5px;line-height:20px;color:#333;padding-left:6px;overflow:hidden">20</div>
<!-- table card -->
<div class="abs" style="left:268px;top:601px;width:1585px;height:437px;background:#fff;border-radius:10px"></div>
<div class="abs" style="left:278px;top:616px;width:311px;height:27px;background:#f5f5f5;border-radius:13px"></div>
<div class="abs" style="left:284px;top:622px;font-size:12px;line-height:16px;color:#a0a0a0;letter-spacing:-0.25px;white-space:nowrap">Search highlighted text columns</div>
<svg class="abs" style="left:593px;top:624px" width="18" height="12" viewBox="0 0 18 12" fill="none" stroke="#555" stroke-width="1.3" stroke-linejoin="round"><path d="M6 1 H16.5 V11 H6 L1.2 6 Z"/><path d="M8.5 3.5 L13 8.5 M13 3.5 L8.5 8.5"/></svg>

<div class="abs" style="left:279px;top:660px;width:1559px;height:380px;overflow:hidden">
<div class="abs dots" style="left:81px;top:18px"></div>
<div class="abs dots" style="left:148px;top:18px"></div>
<div class="abs dots" style="left:255px;top:18px"></div>
<div class="abs dots" style="left:352px;top:18px"></div>
<div class="abs dots" style="left:479px;top:18px"></div>
<div class="abs dots" style="left:606px;top:18px"></div>
<div class="abs dots" style="left:703px;top:18px"></div>
<div class="abs dots" style="left:830px;top:18px"></div>
<div class="abs dots" style="left:957px;top:18px"></div>
<div class="abs dots" style="left:1084px;top:18px"></div>
<div class="abs dots" style="left:1211px;top:18px"></div>
<div class="abs dots" style="left:1338px;top:18px"></div>
<div class="abs dots" style="left:1465px;top:18px"></div>
<div class="abs" style="left:0;top:32px;width:1559px;height:1px;background:#cfcfcf"></div>
<div class="abs" style="left:0;top:73px;width:1559px;height:1px;background:#cfcfcf"></div>
<div class="abs" style="left:71px;top:39px;height:28px;border-left:1px dotted #b5b5b5"></div>
<div class="abs" style="left:138px;top:39px;height:28px;border-left:1px dotted #b5b5b5"></div>
<div class="abs" style="left:245px;top:39px;height:28px;border-left:1px dotted #b5b5b5"></div>
<div class="abs" style="left:342px;top:39px;height:28px;border-left:1px dotted #b5b5b5"></div>
<div class="abs" style="left:469px;top:39px;height:28px;border-left:1px dotted #b5b5b5"></div>
<div class="abs" style="left:596px;top:39px;height:28px;border-left:1px dotted #b5b5b5"></div>
<div class="abs" style="left:693px;top:39px;height:28px;border-left:1px dotted #b5b5b5"></div>
<div class="abs" style="left:820px;top:39px;height:28px;border-left:1px dotted #b5b5b5"></div>
<div class="abs" style="left:947px;top:39px;height:28px;border-left:1px dotted #b5b5b5"></div>
<div class="abs" style="left:1074px;top:39px;height:28px;border-left:1px dotted #b5b5b5"></div>
<div class="abs" style="left:1201px;top:39px;height:28px;border-left:1px dotted #b5b5b5"></div>
<div class="abs" style="left:1328px;top:39px;height:28px;border-left:1px dotted #b5b5b5"></div>
<div class="abs" style="left:1455px;top:39px;height:28px;border-left:1px dotted #b5b5b5"></div>
<div class="abs cb" style="left:6px;top:45px"></div>
<div class="abs th" style="left:24px;top:45px;width:100px;text-align:right">ID</div>
<svg class="abs" style="left:128px;top:47px" width="8" height="11" viewBox="0 0 8 11" fill="none" stroke="#666" stroke-width="1"><path d="M2 1 H4 V9.5 M1.5 7 L4 9.5 L6.5 7"/></svg>
<div class="abs th" style="left:146px;top:45px">STATUS</div>
<div class="abs th" style="left:234px;top:37px;width:120px;text-align:center">DATE OF<br>COMPLETION</div>
<div class="abs th" style="left:350px;top:45px">CREATED</div>
<div class="abs th" style="left:473px;top:45px;width:120px;text-align:center">FROM PC</div>
<div class="abs th" style="left:585px;top:45px;width:120px;text-align:center">CLOSE DATE</div>
<div class="abs th" style="left:697px;top:37px;width:120px;text-align:center">CATEGORY /<br>SUBCATEGORY</div>
<div class="abs th" style="left:829px;top:45px">TOPIC</div>
<div class="abs th" style="left:955px;top:45px">APPLICATOR</div>
<div class="abs th" style="left:1082px;top:45px">LOCATION</div>
<div class="abs th" style="left:1209px;top:45px">RESOURCE</div>
<div class="abs th" style="left:1336px;top:45px">PRIORITY</div>
<div class="abs th" style="left:1474px;top:45px">SUPPORT GROUP</div>
<div class="abs" style="left:0;top:122px;width:1559px;height:1px;background:#e6e6e6"></div>
<div class="abs cb" style="left:6px;top:90.0px"></div>
<svg class="abs" style="left:32px;top:91.5px" width="32" height="12" viewBox="0 0 32 12"><g fill="#000"><rect x="0.0" y="0.0" width="3" height="3"/><rect x="0.0" y="4.5" width="3" height="3"/><rect x="0.0" y="9.0" width="3" height="3"/><rect x="4.5" y="0.0" width="3" height="3"/><rect x="4.5" y="4.5" width="3" height="3"/><rect x="4.5" y="9.0" width="3" height="3"/><rect x="9.0" y="0.0" width="3" height="3"/><rect x="9.0" y="4.5" width="3" height="3"/><rect x="9.0" y="9.0" width="3" height="3"/></g><g fill="none" stroke="#222" stroke-width="1.2"><rect x="20.6" y="0.6" width="10.8" height="10.8" rx="1.5"/><line x1="20.6" y1="4" x2="31.4" y2="4"/><line x1="20.6" y1="7.5" x2="31.4" y2="7.5"/><line x1="23.5" y1="0.6" x2="23.5" y2="11.4"/></g></svg>
<div class="abs tid" style="left:35px;top:89.5px">6</div>
<div class="abs badge2" style="left:143px;top:89.0px;background:#aaffaa">Solved</div>
<div class="abs tdate" style="left:250px;top:81.5px">2024-07-18<br>09:04</div>
<div class="abs td" style="left:347px;top:81.5px;width:119px;overflow:hidden">Katarzyna Donesz<br>(BTCDEMO\katarzyna.donesz)</div>
<div class="abs tcat" style="left:697px;top:81.5px">Software failure<br>/ CRM</div>
<div class="abs ttopic" style="left:825px;top:89.5px">problem with crm</div>
<div class="abs td" style="left:952px;top:81.5px;width:119px;overflow:hidden">Agnieszka Szady<br>(BTCDEMO\agnieszka.szady)</div>
<div class="abs td" style="left:1333px;top:89.5px">Normalny</div>
<div class="abs td" style="left:1460px;top:89.5px">Technicians</div>
<div class="abs" style="left:0;top:171px;width:1559px;height:1px;background:#e6e6e6"></div>
<div class="abs cb" style="left:6px;top:139.0px"></div>
<svg class="abs" style="left:32px;top:140.5px" width="32" height="12" viewBox="0 0 32 12"><g fill="#000"><rect x="0.0" y="0.0" width="3" height="3"/><rect x="0.0" y="4.5" width="3" height="3"/><rect x="0.0" y="9.0" width="3" height="3"/><rect x="4.5" y="0.0" width="3" height="3"/><rect x="4.5" y="4.5" width="3" height="3"/><rect x="4.5" y="9.0" width="3" height="3"/><rect x="9.0" y="0.0" width="3" height="3"/><rect x="9.0" y="4.5" width="3" height="3"/><rect x="9.0" y="9.0" width="3" height="3"/></g><g fill="none" stroke="#222" stroke-width="1.2"><rect x="20.6" y="0.6" width="10.8" height="10.8" rx="1.5"/><line x1="20.6" y1="4" x2="31.4" y2="4"/><line x1="20.6" y1="7.5" x2="31.4" y2="7.5"/><line x1="23.5" y1="0.6" x2="23.5" y2="11.4"/></g></svg>
<div class="abs tid" style="left:35px;top:138.5px">5</div>
<div class="abs badge2" style="left:143px;top:138.0px;background:#aaffaa">Solved</div>
<div class="abs tdate" style="left:250px;top:130.5px">2024-07-16<br>10:38</div>
<div class="abs td" style="left:347px;top:130.5px;width:119px;overflow:hidden">Katarzyna Donesz<br>(BTCDEMO\katarzyna.donesz)</div>
<div class="abs tcat" style="left:697px;top:130.5px">Equipment failure<br>/ Printers</div>
<div class="abs ttopic" style="left:825px;top:138.5px">hp54555</div>
<div class="abs td" style="left:952px;top:130.5px;width:119px;overflow:hidden">Katarzyna Donesz<br>(BTCDEMO\katarzyna.donesz)</div>
<div class="abs tres" style="left:1206px;top:138.5px">(KD1) [BTCWEB31]</div>
<div class="abs td" style="left:1333px;top:138.5px">Normalny</div>
<div class="abs td" style="left:1460px;top:138.5px">Technicians</div>
<div class="abs" style="left:0;top:220px;width:1559px;height:1px;background:#e6e6e6"></div>
<div class="abs cb" style="left:6px;top:188.0px"></div>
<svg class="abs" style="left:32px;top:189.5px" width="32" height="12" viewBox="0 0 32 12"><g fill="#000"><rect x="0.0" y="0.0" width="3" height="3"/><rect x="0.0" y="4.5" width="3" height="3"/><rect x="0.0" y="9.0" width="3" height="3"/><rect x="4.5" y="0.0" width="3" height="3"/><rect x="4.5" y="4.5" width="3" height="3"/><rect x="4.5" y="9.0" width="3" height="3"/><rect x="9.0" y="0.0" width="3" height="3"/><rect x="9.0" y="4.5" width="3" height="3"/><rect x="9.0" y="9.0" width="3" height="3"/></g><g fill="none" stroke="#222" stroke-width="1.2"><rect x="20.6" y="0.6" width="10.8" height="10.8" rx="1.5"/><line x1="20.6" y1="4" x2="31.4" y2="4"/><line x1="20.6" y1="7.5" x2="31.4" y2="7.5"/><line x1="23.5" y1="0.6" x2="23.5" y2="11.4"/></g></svg>
<div class="abs tid" style="left:35px;top:187.5px">4</div>
<div class="abs badge2" style="left:143px;top:187.0px;background:#f4f4f4">Open</div>
<div class="abs tdate" style="left:250px;top:179.5px">2024-06-21<br>10:41</div>
<div class="abs td" style="left:347px;top:179.5px;width:119px;overflow:hidden">Katarzyna Donesz<br>(BTCDEMO\katarzyna.donesz)</div>
<div class="abs tcat" style="left:697px;top:179.5px">Software failure<br>/ CRM</div>
<div class="abs ttopic" style="left:825px;top:187.5px">software problem</div>
<div class="abs td" style="left:952px;top:187.5px;width:119px;overflow:hidden">Andrzej Nowak</div>
<div class="abs td" style="left:1333px;top:187.5px">Normalny</div>
<div class="abs td" style="left:1460px;top:187.5px">Technicians</div>
<div class="abs" style="left:0;top:269px;width:1559px;height:1px;background:#e6e6e6"></div>
<div class="abs cb" style="left:6px;top:237.0px"></div>
<svg class="abs" style="left:32px;top:238.5px" width="32" height="12" viewBox="0 0 32 12"><g fill="#000"><rect x="0.0" y="0.0" width="3" height="3"/><rect x="0.0" y="4.5" width="3" height="3"/><rect x="0.0" y="9.0" width="3" height="3"/><rect x="4.5" y="0.0" width="3" height="3"/><rect x="4.5" y="4.5" width="3" height="3"/><rect x="4.5" y="9.0" width="3" height="3"/><rect x="9.0" y="0.0" width="3" height="3"/><rect x="9.0" y="4.5" width="3" height="3"/><rect x="9.0" y="9.0" width="3" height="3"/></g><g fill="none" stroke="#222" stroke-width="1.2"><rect x="20.6" y="0.6" width="10.8" height="10.8" rx="1.5"/><line x1="20.6" y1="4" x2="31.4" y2="4"/><line x1="20.6" y1="7.5" x2="31.4" y2="7.5"/><line x1="23.5" y1="0.6" x2="23.5" y2="11.4"/></g></svg>
<div class="abs tid" style="left:35px;top:236.5px">3</div>
<div class="abs badge2" style="left:143px;top:236.0px;background:#aaffaa">Solved</div>
<div class="abs tdate" style="left:250px;top:228.5px">2024-06-18<br>12:47</div>
<div class="abs td" style="left:347px;top:228.5px;width:119px;overflow:hidden">Katarzyna Donesz<br>(BTCDEMO\katarzyna.donesz)</div>
<div class="abs tcat" style="left:697px;top:228.5px">Equipment failure<br>/ Printers</div>
<div class="abs ttopic" style="left:825px;top:236.5px">Hp 50505</div>
<div class="abs td" style="left:952px;top:228.5px;width:119px;overflow:hidden">Katarzyna Donesz<br>(BTCDEMO\katarzyna.donesz)</div>
<div class="abs td" style="left:1333px;top:236.5px">Normalny</div>
<div class="abs tnone" style="left:1460px;top:236.5px">[none]</div>
<div class="abs" style="left:0;top:318px;width:1559px;height:1px;background:#e6e6e6"></div>
<div class="abs cb" style="left:6px;top:286.0px"></div>
<svg class="abs" style="left:32px;top:287.5px" width="32" height="12" viewBox="0 0 32 12"><g fill="#000"><rect x="0.0" y="0.0" width="3" height="3"/><rect x="0.0" y="4.5" width="3" height="3"/><rect x="0.0" y="9.0" width="3" height="3"/><rect x="4.5" y="0.0" width="3" height="3"/><rect x="4.5" y="4.5" width="3" height="3"/><rect x="4.5" y="9.0" width="3" height="3"/><rect x="9.0" y="0.0" width="3" height="3"/><rect x="9.0" y="4.5" width="3" height="3"/><rect x="9.0" y="9.0" width="3" height="3"/></g><g fill="none" stroke="#222" stroke-width="1.2"><rect x="20.6" y="0.6" width="10.8" height="10.8" rx="1.5"/><line x1="20.6" y1="4" x2="31.4" y2="4"/><line x1="20.6" y1="7.5" x2="31.4" y2="7.5"/><line x1="23.5" y1="0.6" x2="23.5" y2="11.4"/></g></svg>
<div class="abs tid" style="left:35px;top:285.5px">2</div>
<div class="abs badge2" style="left:143px;top:285.0px;background:#aaffaa">Solved</div>
<div class="abs tdate" style="left:250px;top:277.5px">2024-04-23<br>10:05</div>
<div class="abs td" style="left:347px;top:277.5px;width:119px;overflow:hidden">Joann Klepacka<br>(BTCDEMO\joanna.klepacka)</div>
<div class="abs tcat" style="left:697px;top:277.5px">Software failure<br>/ CRM</div>
<div class="abs ttopic" style="left:825px;top:285.5px">Login problem</div>
<div class="abs td" style="left:952px;top:277.5px;width:119px;overflow:hidden">Joann Klepacka<br>(BTCDEMO\joanna.klepacka)</div>
<div class="abs tres" style="left:1206px;top:285.5px">BTCWEB10</div>
<div class="abs td" style="left:1333px;top:285.5px">Normalny</div>
<div class="abs tnone" style="left:1460px;top:285.5px">[none]</div>
<div class="abs" style="left:0;top:367px;width:1559px;height:1px;background:#e6e6e6"></div>
<div class="abs cb" style="left:6px;top:335.0px"></div>
<svg class="abs" style="left:32px;top:336.5px" width="32" height="12" viewBox="0 0 32 12"><g fill="#000"><rect x="0.0" y="0.0" width="3" height="3"/><rect x="0.0" y="4.5" width="3" height="3"/><rect x="0.0" y="9.0" width="3" height="3"/><rect x="4.5" y="0.0" width="3" height="3"/><rect x="4.5" y="4.5" width="3" height="3"/><rect x="4.5" y="9.0" width="3" height="3"/><rect x="9.0" y="0.0" width="3" height="3"/><rect x="9.0" y="4.5" width="3" height="3"/><rect x="9.0" y="9.0" width="3" height="3"/></g><g fill="none" stroke="#222" stroke-width="1.2"><rect x="20.6" y="0.6" width="10.8" height="10.8" rx="1.5"/><line x1="20.6" y1="4" x2="31.4" y2="4"/><line x1="20.6" y1="7.5" x2="31.4" y2="7.5"/><line x1="23.5" y1="0.6" x2="23.5" y2="11.4"/></g></svg>
<div class="abs tid" style="left:35px;top:334.5px">1</div>
<div class="abs badge2" style="left:143px;top:334.0px;background:#f4f4f4">New</div>
<div class="abs tdate" style="left:250px;top:326.5px">2024-01-30<br>08:53</div>
<div class="abs td" style="left:347px;top:334.5px;width:119px;overflow:hidden">poc\tbaut</div>
<div class="abs td" style="left:474px;top:334.5px">BTCDBR02</div>
<div class="abs ttopic" style="left:825px;top:326.5px">Problem with<br>printing</div>
<div class="abs td" style="left:952px;top:334.5px;width:119px;overflow:hidden">poc\tbaut</div>
<div class="abs td" style="left:1333px;top:334.5px">Normalny</div>
<div class="abs tnone" style="left:1460px;top:334.5px">[none]</div>
</div>


</body></html>
